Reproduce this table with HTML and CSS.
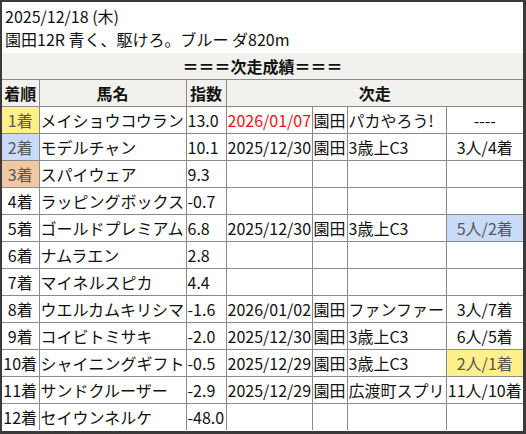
FILE: index.html
```html
<!DOCTYPE html>
<html lang="ja">
<head>
<meta charset="utf-8">
<link rel="stylesheet" href="styles.css">
</head>
<body>
<div class="frame">
  <div class="head">
    <div>2025/12/18 (木)</div>
    <div>園田12R 青く、駆けろ。ブルー ダ820m</div>
  </div>
  <table class="res">
    <colgroup>
      <col class="c1"><col class="c2"><col class="c3"><col class="c4"><col class="c5"><col class="c6"><col class="c7">
    </colgroup>
    <tr class="hd"><th colspan="7">＝＝＝次走成績＝＝＝</th></tr>
    <tr class="hd"><th>着順</th><th>馬名</th><th>指数</th><th colspan="4">次走</th></tr>
    <tr><td class="rk gold">1着</td><td>メイショウコウラン</td><td>13.0</td><td class="red">2026/01/07</td><td>園田</td><td>パカやろう!</td><td class="ct">----</td></tr>
    <tr><td class="rk silver">2着</td><td>モデルチャン</td><td>10.1</td><td>2025/12/30</td><td>園田</td><td>3歳上C3</td><td class="ct">3人/4着</td></tr>
    <tr><td class="rk bronze">3着</td><td>スパイウェア</td><td>9.3</td><td></td><td></td><td></td><td></td></tr>
    <tr><td class="rk">4着</td><td>ラッピングボックス</td><td>-0.7</td><td></td><td></td><td></td><td></td></tr>
    <tr><td class="rk">5着</td><td>ゴールドプレミアム</td><td>6.8</td><td>2025/12/30</td><td>園田</td><td>3歳上C3</td><td class="ct silver">5人/2着</td></tr>
    <tr><td class="rk">6着</td><td>ナムラエン</td><td>2.8</td><td></td><td></td><td></td><td></td></tr>
    <tr><td class="rk">7着</td><td>マイネルスピカ</td><td>4.4</td><td></td><td></td><td></td><td></td></tr>
    <tr><td class="rk">8着</td><td>ウエルカムキリシマ</td><td>-1.6</td><td>2026/01/02</td><td>園田</td><td>ファンファー</td><td class="ct">3人/7着</td></tr>
    <tr><td class="rk">9着</td><td>コイビトミサキ</td><td>-2.0</td><td>2025/12/30</td><td>園田</td><td>3歳上C3</td><td class="ct">6人/5着</td></tr>
    <tr><td class="rk">10着</td><td>シャイニングギフト</td><td>-0.5</td><td>2025/12/29</td><td>園田</td><td>3歳上C3</td><td class="ct gold">2人/1着</td></tr>
    <tr><td class="rk">11着</td><td>サンドクルーザー</td><td>-2.9</td><td>2025/12/29</td><td>園田</td><td>広渡町スプリ</td><td class="ct">11人/10着</td></tr>
    <tr><td class="rk">12着</td><td>セイウンネルケ</td><td>-48.0</td><td></td><td></td><td></td><td></td></tr>
  </table>
</div>
</body>
</html>
```

FILE: styles.css
```css
html, body {
  margin: 0;
  padding: 0;
  background: #3a3a3a;
}
body {
  width: 526px;
  height: 434px;
  overflow: hidden;
}
.frame {
  margin: 2px 3px 0 2px;
  width: 521px;
  height: 429px;
  background: #fff;
  font-family: "Noto Sans CJK JP", "Noto Sans", sans-serif;
  font-size: 16px;
  color: #111;
  overflow: hidden;
}
.head {
  padding: 3px 3px 2px 3px;
  line-height: 23px;
}
.res {
  border-collapse: collapse;
  table-layout: fixed;
  width: 521px;
  border-style: hidden;
}
.res col.c1 { width: 37px; }
.res col.c2 { width: 147px; }
.res col.c3 { width: 40px; }
.res col.c4 { width: 86px; }
.res col.c5 { width: 35px; }
.res col.c6 { width: 99px; }
.res col.c7 { width: 77px; }
.res th, .res td {
  border: 1px solid #8a8a8a;
  padding: 0 1px;
  height: 26px;
  line-height: 26px;
  white-space: nowrap;
  overflow: hidden;
  text-align: left;
  font-weight: normal;
}
.res tr:first-child th {
  border-top: 1px solid #8a8a8a;
}
.res .hd th {
  background: #f2f1ed;
  font-weight: bold;
  text-align: center;
}
.res td.rk, .res td.ct {
  text-align: center;
}
.red { color: #f01020; }
.gold { background: #fff08c; color: #555; }
.silver { background: #c9dbf8; color: #555; }
.bronze { background: #f0c9a4; color: #555; }
```
